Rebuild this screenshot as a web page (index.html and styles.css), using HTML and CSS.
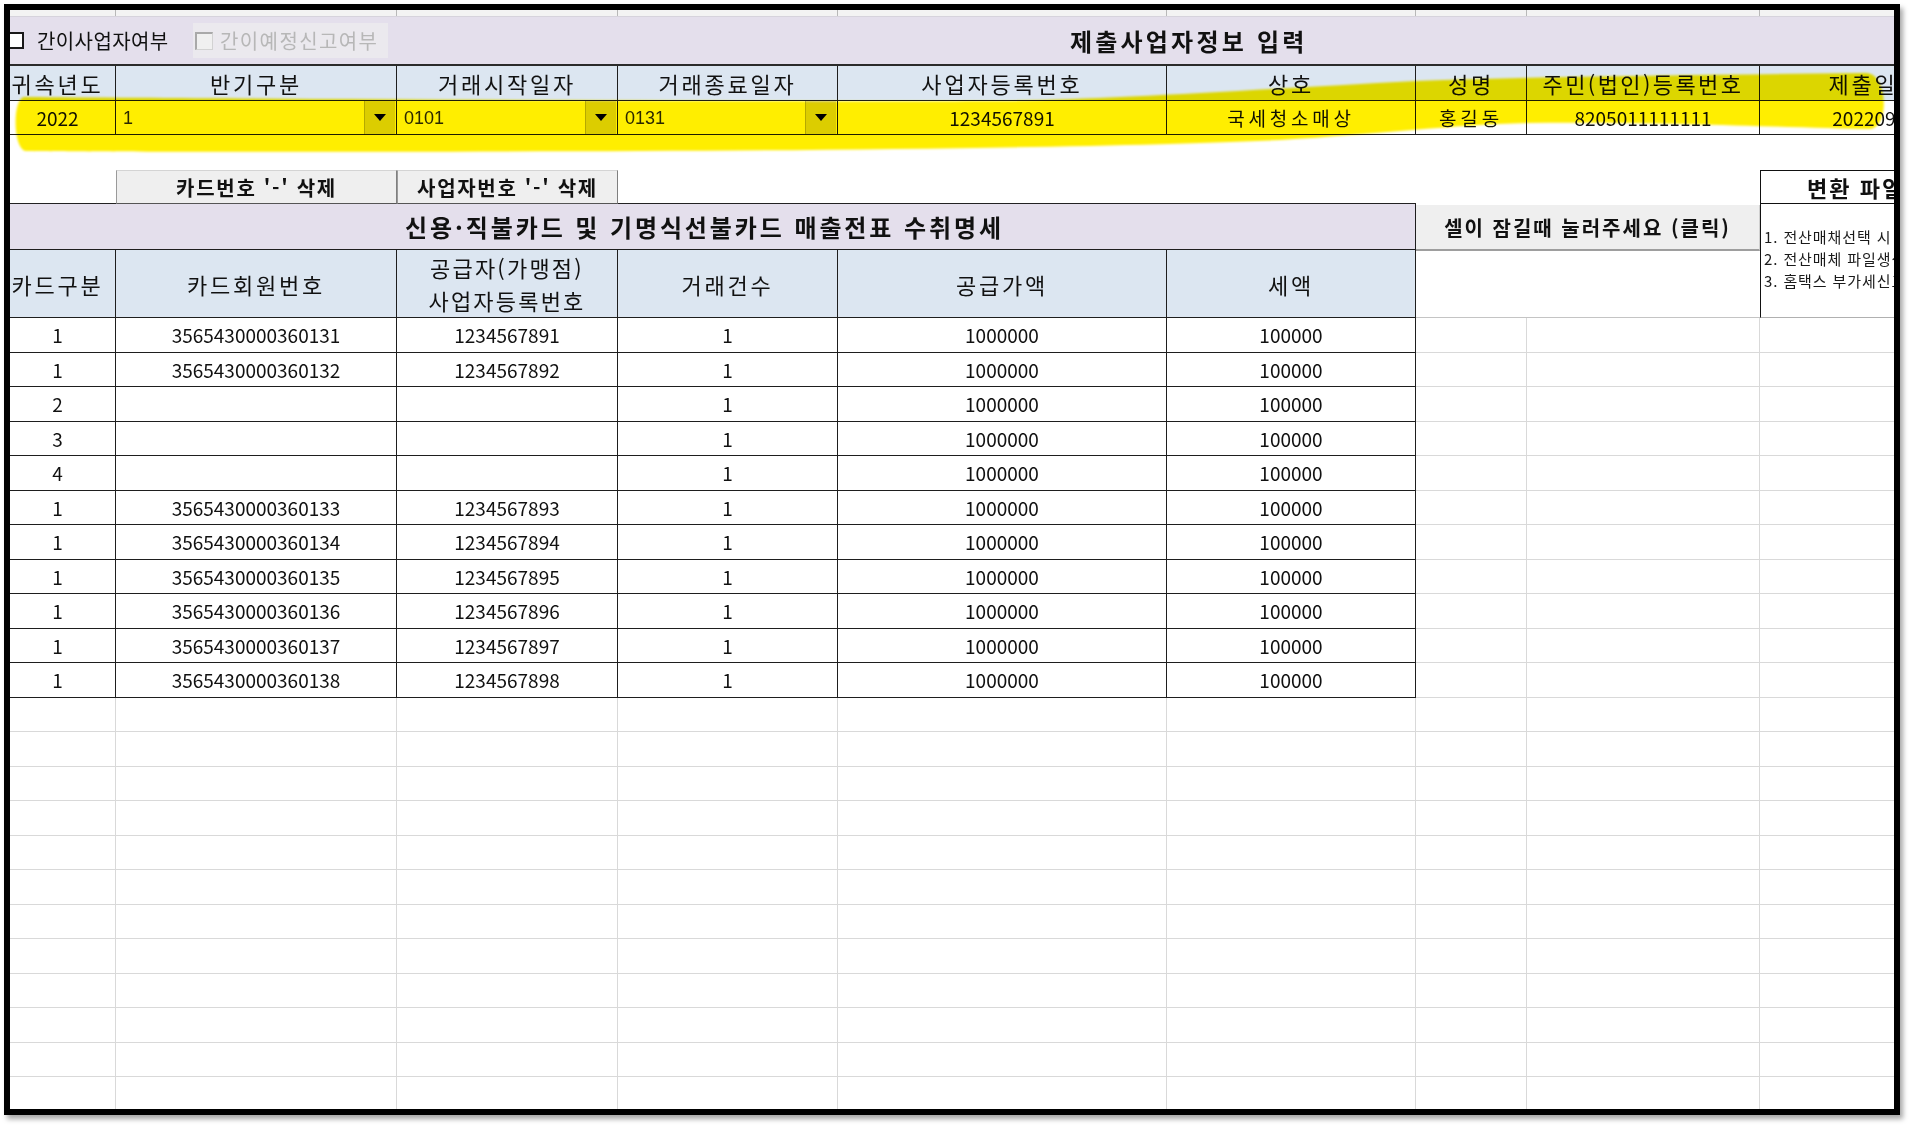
FILE: index.html
```html
<!DOCTYPE html>
<html lang="ko">
<head>
<meta charset="utf-8">
<title>신용카드 매출전표 수취명세</title>
<link rel="stylesheet" href="styles.css">
</head>
<body>
<div class="page">
  <div class="viewport">
    <div class="sheet">
      <div class="row r0">
        <div class="cell a"></div><div class="cell b"></div><div class="cell c"></div><div class="cell d"></div><div class="cell e"></div><div class="cell f"></div><div class="cell g"></div><div class="cell h"></div><div class="cell i"></div>
      </div>
      <div class="row r1">
        <span class="chk"></span>
        <span class="lbl">간이사업자여부</span>
        <span class="dis"><span class="chk-dis"></span><span class="lbl-dis">간이예정신고여부</span></span>
        <span class="title1">제출사업자정보 입력</span>
      </div>
      <div class="row r2">
        <div class="cell hc a">귀속년도</div>
        <div class="cell hc b">반기구분</div>
        <div class="cell hc c">거래시작일자</div>
        <div class="cell hc d">거래종료일자</div>
        <div class="cell hc e">사업자등록번호</div>
        <div class="cell hc f">상호</div>
        <div class="cell hc g">성명</div>
        <div class="cell hc h wide">주민(법인)등록번호</div>
        <div class="cell hc i">제출일자</div>
      </div>
      <div class="row r3">
        <div class="cell dc a">2022</div>
        <div class="cell dc dd b"><span class="ddv">1</span><span class="ddb"><i class="tri"></i></span></div>
        <div class="cell dc dd c"><span class="ddv">0101</span><span class="ddb"><i class="tri"></i></span></div>
        <div class="cell dc dd d"><span class="ddv">0131</span><span class="ddb"><i class="tri"></i></span></div>
        <div class="cell dc e">1234567891</div>
        <div class="cell dc f ko">국세청소매상</div>
        <div class="cell dc g ko">홍길동</div>
        <div class="cell dc h">8205011111111</div>
        <div class="cell dc i">20220901</div>
      </div>
      <div class="row r4"></div>
      <div class="row r6">
        <div class="cell a line-b"></div>
        <div class="cell b btn">카드번호 '-' 삭제</div>
        <div class="cell c btn">사업자번호 '-' 삭제</div>
        <div class="cell d line-b"></div>
        <div class="cell e line-b"></div>
        <div class="cell f line-b"></div>
        <div class="cell g"></div>
        <div class="cell h"></div>
        <div class="cell i conv">변환 파일 생성</div>
      </div>
      <div class="row sect">
        <div class="sect-main">
          <div class="sect-title">신용·직불카드 및 기명식선불카드 매출전표 수취명세</div>
          <div class="row th">
            <div class="cell hc a">카드구분</div>
            <div class="cell hc b">카드회원번호</div>
            <div class="cell hc c two">공급자(가맹점)<br>사업자등록번호</div>
            <div class="cell hc d">거래건수</div>
            <div class="cell hc e">공급가액</div>
            <div class="cell hc f">세액</div>
          </div>
        </div>
        <div class="sect-side">
          <div class="lock-btn">셀이 잠길때 눌러주세요 (클릭)</div>
          <div class="side-blank"></div>
        </div>
        <div class="notes">
          <p>1. 전산매채선택 시 주의사항</p>
          <p>2. 전산매체 파일생성 후 저장</p>
          <p>3. 홈택스 부가세신고 제출</p>
        </div>
      </div>
      <div class="body">
        <div class="row tr"><div class="cell td a">1</div><div class="cell td b">3565430000360131</div><div class="cell td c">1234567891</div><div class="cell td d">1</div><div class="cell td e">1000000</div><div class="cell td f">100000</div><div class="cell gl g"></div><div class="cell gl h"></div><div class="cell gl i"></div></div>
        <div class="row tr"><div class="cell td a">1</div><div class="cell td b">3565430000360132</div><div class="cell td c">1234567892</div><div class="cell td d">1</div><div class="cell td e">1000000</div><div class="cell td f">100000</div><div class="cell gl g"></div><div class="cell gl h"></div><div class="cell gl i"></div></div>
        <div class="row tr"><div class="cell td a">2</div><div class="cell td b"></div><div class="cell td c"></div><div class="cell td d">1</div><div class="cell td e">1000000</div><div class="cell td f">100000</div><div class="cell gl g"></div><div class="cell gl h"></div><div class="cell gl i"></div></div>
        <div class="row tr"><div class="cell td a">3</div><div class="cell td b"></div><div class="cell td c"></div><div class="cell td d">1</div><div class="cell td e">1000000</div><div class="cell td f">100000</div><div class="cell gl g"></div><div class="cell gl h"></div><div class="cell gl i"></div></div>
        <div class="row tr"><div class="cell td a">4</div><div class="cell td b"></div><div class="cell td c"></div><div class="cell td d">1</div><div class="cell td e">1000000</div><div class="cell td f">100000</div><div class="cell gl g"></div><div class="cell gl h"></div><div class="cell gl i"></div></div>
        <div class="row tr"><div class="cell td a">1</div><div class="cell td b">3565430000360133</div><div class="cell td c">1234567893</div><div class="cell td d">1</div><div class="cell td e">1000000</div><div class="cell td f">100000</div><div class="cell gl g"></div><div class="cell gl h"></div><div class="cell gl i"></div></div>
        <div class="row tr"><div class="cell td a">1</div><div class="cell td b">3565430000360134</div><div class="cell td c">1234567894</div><div class="cell td d">1</div><div class="cell td e">1000000</div><div class="cell td f">100000</div><div class="cell gl g"></div><div class="cell gl h"></div><div class="cell gl i"></div></div>
        <div class="row tr"><div class="cell td a">1</div><div class="cell td b">3565430000360135</div><div class="cell td c">1234567895</div><div class="cell td d">1</div><div class="cell td e">1000000</div><div class="cell td f">100000</div><div class="cell gl g"></div><div class="cell gl h"></div><div class="cell gl i"></div></div>
        <div class="row tr"><div class="cell td a">1</div><div class="cell td b">3565430000360136</div><div class="cell td c">1234567896</div><div class="cell td d">1</div><div class="cell td e">1000000</div><div class="cell td f">100000</div><div class="cell gl g"></div><div class="cell gl h"></div><div class="cell gl i"></div></div>
        <div class="row tr"><div class="cell td a">1</div><div class="cell td b">3565430000360137</div><div class="cell td c">1234567897</div><div class="cell td d">1</div><div class="cell td e">1000000</div><div class="cell td f">100000</div><div class="cell gl g"></div><div class="cell gl h"></div><div class="cell gl i"></div></div>
        <div class="row tr"><div class="cell td a">1</div><div class="cell td b">3565430000360138</div><div class="cell td c">1234567898</div><div class="cell td d">1</div><div class="cell td e">1000000</div><div class="cell td f">100000</div><div class="cell gl g"></div><div class="cell gl h"></div><div class="cell gl i"></div></div>
      </div>
      <div class="empty">
        <div class="row tr"><div class="cell gl a"></div><div class="cell gl b"></div><div class="cell gl c"></div><div class="cell gl d"></div><div class="cell gl e"></div><div class="cell gl f"></div><div class="cell gl g"></div><div class="cell gl h"></div><div class="cell gl i"></div></div>
        <div class="row tr"><div class="cell gl a"></div><div class="cell gl b"></div><div class="cell gl c"></div><div class="cell gl d"></div><div class="cell gl e"></div><div class="cell gl f"></div><div class="cell gl g"></div><div class="cell gl h"></div><div class="cell gl i"></div></div>
        <div class="row tr"><div class="cell gl a"></div><div class="cell gl b"></div><div class="cell gl c"></div><div class="cell gl d"></div><div class="cell gl e"></div><div class="cell gl f"></div><div class="cell gl g"></div><div class="cell gl h"></div><div class="cell gl i"></div></div>
        <div class="row tr"><div class="cell gl a"></div><div class="cell gl b"></div><div class="cell gl c"></div><div class="cell gl d"></div><div class="cell gl e"></div><div class="cell gl f"></div><div class="cell gl g"></div><div class="cell gl h"></div><div class="cell gl i"></div></div>
        <div class="row tr"><div class="cell gl a"></div><div class="cell gl b"></div><div class="cell gl c"></div><div class="cell gl d"></div><div class="cell gl e"></div><div class="cell gl f"></div><div class="cell gl g"></div><div class="cell gl h"></div><div class="cell gl i"></div></div>
        <div class="row tr"><div class="cell gl a"></div><div class="cell gl b"></div><div class="cell gl c"></div><div class="cell gl d"></div><div class="cell gl e"></div><div class="cell gl f"></div><div class="cell gl g"></div><div class="cell gl h"></div><div class="cell gl i"></div></div>
        <div class="row tr"><div class="cell gl a"></div><div class="cell gl b"></div><div class="cell gl c"></div><div class="cell gl d"></div><div class="cell gl e"></div><div class="cell gl f"></div><div class="cell gl g"></div><div class="cell gl h"></div><div class="cell gl i"></div></div>
        <div class="row tr"><div class="cell gl a"></div><div class="cell gl b"></div><div class="cell gl c"></div><div class="cell gl d"></div><div class="cell gl e"></div><div class="cell gl f"></div><div class="cell gl g"></div><div class="cell gl h"></div><div class="cell gl i"></div></div>
        <div class="row tr"><div class="cell gl a"></div><div class="cell gl b"></div><div class="cell gl c"></div><div class="cell gl d"></div><div class="cell gl e"></div><div class="cell gl f"></div><div class="cell gl g"></div><div class="cell gl h"></div><div class="cell gl i"></div></div>
        <div class="row tr"><div class="cell gl a"></div><div class="cell gl b"></div><div class="cell gl c"></div><div class="cell gl d"></div><div class="cell gl e"></div><div class="cell gl f"></div><div class="cell gl g"></div><div class="cell gl h"></div><div class="cell gl i"></div></div>
        <div class="row tr"><div class="cell gl a"></div><div class="cell gl b"></div><div class="cell gl c"></div><div class="cell gl d"></div><div class="cell gl e"></div><div class="cell gl f"></div><div class="cell gl g"></div><div class="cell gl h"></div><div class="cell gl i"></div></div>
        <div class="row tr"><div class="cell gl a"></div><div class="cell gl b"></div><div class="cell gl c"></div><div class="cell gl d"></div><div class="cell gl e"></div><div class="cell gl f"></div><div class="cell gl g"></div><div class="cell gl h"></div><div class="cell gl i"></div></div>
        <div class="row tr"><div class="cell gl a"></div><div class="cell gl b"></div><div class="cell gl c"></div><div class="cell gl d"></div><div class="cell gl e"></div><div class="cell gl f"></div><div class="cell gl g"></div><div class="cell gl h"></div><div class="cell gl i"></div></div>
      </div>
      <svg class="hl" width="1990" height="200" viewBox="0 0 1990 200" aria-hidden="true">
        <defs><filter id="soft" x="-2%" y="-20%" width="104%" height="140%"><feGaussianBlur stdDeviation="1.3"/></filter></defs>
        <path filter="url(#soft)" fill="#ffee00" d="M 24 97 C 300 99, 800 102, 1000 101 C 1100 100, 1250 90, 1416 81 C 1550 76, 1700 75, 1866 73 C 1888 73, 1890 128, 1870 129 C 1800 128, 1650 121, 1527 123 C 1450 125, 1380 134, 1280 140 C 1150 146, 900 150, 640 151 C 400 152, 100 152, 26 151 C 13 150, 12 99, 24 97 Z"/>
      </svg>
    </div>
  </div>
  <div class="frame"></div>
</div>
</body>
</html>
```

FILE: styles.css
```css
html, body {
  margin: 0;
  padding: 0;
  background: #ffffff;
}

.page {
  position: relative;
  width: 1913px;
  height: 1128px;
  padding: 10px 0 0 10px;
  box-sizing: border-box;
  overflow: hidden;
  background: #ffffff;
}

.viewport {
  width: 1884px;
  height: 1099px;
  overflow: hidden;
}

.sheet {
  position: relative;
  width: 1990px;
  margin: -10px 0 0 -10px;
  font-family: "Noto Sans CJK KR", "Noto Sans", sans-serif;
  color: #111;
  background: #fff;
}

.frame {
  position: absolute;
  left: 4px;
  top: 4px;
  width: 1896px;
  height: 1111px;
  box-sizing: border-box;
  border: 6px solid #000;
  box-shadow: 3px 4px 5px rgba(0, 0, 0, 0.35);
  pointer-events: none;
}

.row {
  display: flex;
}

.cell {
  flex: none;
  box-sizing: border-box;
  display: flex;
  align-items: center;
  justify-content: center;
  overflow: hidden;
  white-space: nowrap;
}

.a { width: 116px; }
.b { width: 281px; }
.c { width: 221px; }
.d { width: 220px; }
.e { width: 329px; }
.f { width: 249px; }
.g { width: 111px; }
.h { width: 233px; }
.i { width: 230px; }

/* top strip */
.r0 {
  height: 17px;
  background: #f3f3f3;
  border-bottom: 1px solid #d6d3dc;
  box-sizing: border-box;
}
.r0 .cell {
  height: 16px;
  border-right: 1px solid #b8b8b8;
}

/* checkbox / title row */
.r1 {
  height: 49px;
  box-sizing: border-box;
  background: #e4dfec;
  border-bottom: 2px solid #2b2b2b;
  align-items: center;
}
.chk {
  flex: none;
  width: 17px;
  height: 17px;
  box-sizing: border-box;
  margin-left: 7px;
  border: 2px solid #1a1a1a;
  background: #ffffff;
}
.lbl {
  flex: none;
  width: 156px;
  margin-left: 13px;
  font-size: 20px;
  letter-spacing: 0.4px;
  color: #111;
}
.dis {
  flex: none;
  width: 195px;
  height: 35px;
  display: flex;
  align-items: center;
  background: #ebe9ee;
}
.chk-dis {
  flex: none;
  width: 18px;
  height: 18px;
  box-sizing: border-box;
  margin-left: 2px;
  border: 1px solid #d2d2d2;
  border-top: 2px solid #a9a9a9;
  border-left: 2px solid #a9a9a9;
  background: #f0f0f0;
}
.lbl-dis {
  margin-left: 7px;
  font-size: 20px;
  letter-spacing: 1.4px;
  color: #b7b7b7;
}
.title1 {
  flex: none;
  margin-left: 682px;
  font-size: 24px;
  font-weight: 700;
  letter-spacing: 3.2px;
  color: #111;
}

/* header cells */
.hc {
  background: #dce6f1;
  border-right: 1px solid #1e1e1e;
  border-bottom: 1px solid #1e1e1e;
  font-size: 22px;
  letter-spacing: 2.8px;
  color: #111;
}
.r2 .hc {
  height: 35px;
}
.hc.wide {
  letter-spacing: 2.4px;
}

/* info data row */
.dc {
  height: 34px;
  border-right: 1px solid #1e1e1e;
  border-bottom: 1px solid #1e1e1e;
  font-size: 19px;
  color: #111;
  background: #ffffff;
}
.ko {
  letter-spacing: 3.8px;
}
.dd {
  justify-content: space-between;
  padding-left: 7px;
}
.ddv {
  font-family: "Liberation Sans", Arial, sans-serif;
  font-size: 18px;
  color: #2a2a2a;
  padding-top: 1px;
}
.ddb {
  width: 31px;
  height: 33px;
  box-sizing: border-box;
  margin-right: 1px;
  align-self: flex-start;
  display: flex;
  align-items: center;
  justify-content: center;
  background: #dcdcdc;
  border-left: 1px solid #b5b5b5;
}
.tri {
  width: 0;
  height: 0;
  border-left: 6px solid transparent;
  border-right: 6px solid transparent;
  border-top: 7px solid #000;
}

/* blank rows */
.r4 {
  height: 35px;
  background: #fff;
}

/* buttons row */
.r6 {
  height: 34px;
}
.r6 .cell {
  height: 34px;
  background: #fff;
}
.line-b {
  border-bottom: 1px solid #222;
}
.btn {
  background: #efefef !important;
  border-top: 1px solid #d4d4d4;
  border-left: 1px solid #9a9a9a;
  border-right: 1px solid #7f7f7f;
  border-bottom: 1px solid #555;
  font-size: 20px;
  font-weight: 700;
  letter-spacing: 1.7px;
  color: #111;
}
.conv {
  border-top: 1px solid #111;
  border-left: 1px solid #111;
  border-bottom: 1px solid #111;
  justify-content: flex-start !important;
  padding-left: 46px;
  font-size: 22px;
  font-weight: 700;
  letter-spacing: 2px;
}

/* section block */
.sect {
  height: 114px;
}
.sect-main {
  flex: none;
  width: 1416px;
  display: flex;
  flex-direction: column;
}
.sect-title {
  height: 46px;
  box-sizing: border-box;
  background: #e4dfec;
  border-bottom: 1px solid #1e1e1e;
  border-right: 1px solid #1e1e1e;
  display: flex;
  align-items: center;
  justify-content: center;
  padding-right: 6px;
  font-size: 24px;
  font-weight: 700;
  letter-spacing: 2.9px;
  color: #111;
}
.th .hc {
  height: 68px;
}
.two {
  text-align: center;
  line-height: 33px;
  white-space: normal;
  letter-spacing: 2.2px;
}
.sect-side {
  flex: none;
  width: 344px;
  display: flex;
  flex-direction: column;
}
.lock-btn {
  height: 46px;
  box-sizing: border-box;
  margin-top: 1px;
  background: #efefef;
  border-bottom: 2px solid #9e9e9e;
  border-right: 1px solid #cfcfcf;
  display: flex;
  align-items: center;
  justify-content: center;
  font-size: 20px;
  font-weight: 700;
  letter-spacing: 2px;
  color: #111;
}
.side-blank {
  flex: 1;
  background: #fff;
  border-bottom: 1px solid #c4c4c4;
}
.notes {
  flex: none;
  width: 230px;
  box-sizing: border-box;
  border-left: 1px solid #111;
  border-bottom: 1px solid #b0b0b0;
  background: #fff;
  padding: 22px 0 0 3px;
  overflow: hidden;
  white-space: nowrap;
  font-size: 15px;
  letter-spacing: 0.9px;
  line-height: 22px;
  color: #1a1a1a;
}
.notes p {
  margin: 0;
}

/* table body */
.tr {
  height: 34.5px;
}
.tr .cell {
  height: 34.5px;
}
.td {
  border-right: 1px solid #1e1e1e;
  border-bottom: 1px solid #1e1e1e;
  font-size: 19px;
  color: #111;
}
.gl {
  border-right: 1px solid #d9d9d9;
  border-bottom: 1px solid #d9d9d9;
}

/* highlighter stroke */
.hl {
  position: absolute;
  left: 0;
  top: 0;
  mix-blend-mode: multiply;
  pointer-events: none;
}
```
